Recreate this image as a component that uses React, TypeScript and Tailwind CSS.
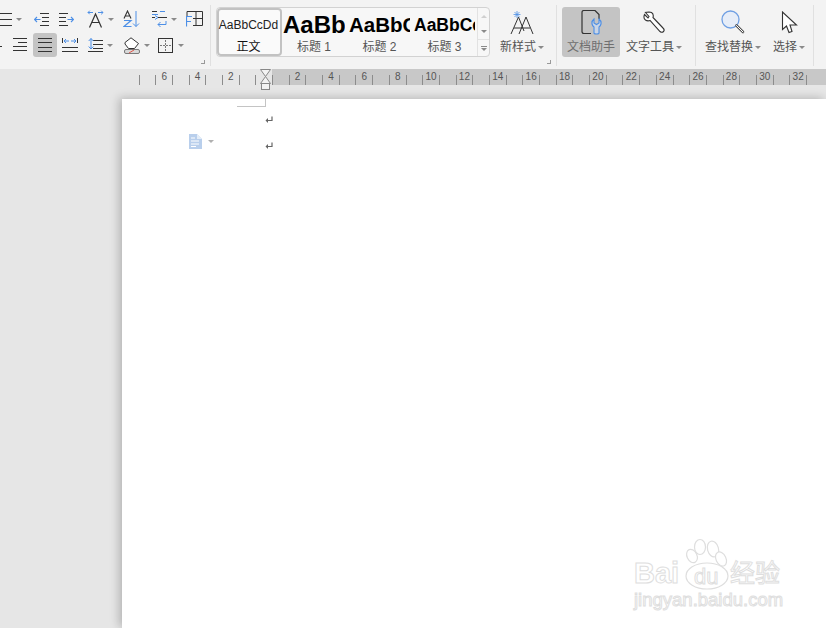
const BLUE = "#4d8fe6"
const DARK = "#333333"

const Caret = ({ className = "" }: { className?: string }) => (
    <span className={`w-0 h-0 border-x-[3px] border-x-transparent border-t-[3px] border-t-[#8a8a8a] ${className}`} />
)

const Lines = ({ w, ys, x = 0, x2 }: { w: number; ys: number[]; x?: number; x2?: number }) => (
    <>
        {ys.map((y) => (
            <path key={y} d={`M${x} ${y}.5H${x2 ?? w}`} stroke={DARK} />
        ))}
    </>
)

const Svg = ({ w, h, className = "", children }: { w: number; h: number; className?: string; children: React.ReactNode }) => (
    <svg width={w} height={h} viewBox={`0 0 ${w} ${h}`} fill="none" className={`shrink-0 ${className}`}>
        {children}
    </svg>
)

const TopRow = () => (
    <div className="flex items-center h-[18px] mt-[10px]">
        <Svg w={12} h={16}><Lines w={12} ys={[2, 8, 14]} /></Svg>
        <Caret className="ml-[4px]" />
        <Svg w={15} h={16} className="ml-[12px]">
            <path d="M6 2.5H15M8 6.5H15M8 10.5H15M6 14.5H15" stroke={DARK} />
            <path d="M6.5 8.5H0.5M3 6L0.5 8.5L3 11" stroke={BLUE} strokeWidth="1.2" />
        </Svg>
        <Svg w={15} h={16} className="ml-[10px]">
            <path d="M0 2.5H9M0 6.5H7M0 10.5H7M0 14.5H9" stroke={DARK} />
            <path d="M8.5 8.5H14.5M12 6L14.5 8.5L12 11" stroke={BLUE} strokeWidth="1.2" />
        </Svg>
        <Svg w={17} h={18} className="ml-[13px]">
            <path d="M2.5 17.5L8.5 4L14.5 17.5M5 12.5H12" stroke={DARK} strokeWidth="1.2" />
            <path d="M1 2.5H6M2.8 0.7L1 2.5L2.8 4.3M16 2.5H11M14.2 0.7L16 2.5L14.2 4.3" stroke={BLUE} />
        </Svg>
        <Caret className="ml-[4px]" />
        <Svg w={17} h={18} className="ml-[9px]">
            <path d="M1 8.5L4.5 1L8 8.5M2.2 6H6.8" stroke={DARK} strokeWidth="1.1" />
            <path d="M1 10.5H8L1 16.5H8.5" stroke={BLUE} strokeWidth="1.2" />
            <path d="M13 1V16.5M10 13.5L13 16.5L16 13.5" stroke={BLUE} />
        </Svg>
        <Svg w={15} h={18} className="ml-[12px]">
            <path d="M0 1.5H5M6 7.5H15M0 7.5H3" stroke={DARK} />
            <path d="M8 1.5H13M0 4.5H6M3 5.5L6 7.5L3 9.5" stroke={BLUE} />
            <path d="M14 11V14.5H6M8.5 12L6 14.5L8.5 17" stroke={BLUE} />
        </Svg>
        <Caret className="ml-[4px]" />
        <Svg w={17} h={16} className="ml-[9px]">
            <path d="M1 5V0.5H16.5V14.5H7M10 0.5V14.5M7 7.5H16.5" stroke={DARK} />
            <path d="M0.5 15.5V5.5H6M0.5 10.5H5" stroke={BLUE} strokeWidth="1.2" />
        </Svg>
    </div>
)

const BottomRow = () => (
    <div className="flex items-center h-[24px] mt-[5px]">
        <Svg w={3} h={16} className="mr-[10px]"><Lines w={2} ys={[9]} /></Svg>
        <Svg w={14} h={16}><Lines w={14} ys={[1, 9, 13]} /><path d="M5 5.5H14" stroke={DARK} /></Svg>
        <div className="ml-[6px] w-[24px] h-[24px] rounded-[3px] bg-[#c4c4c4] flex items-center justify-center">
            <Svg w={14} h={14}><Lines w={14} ys={[0, 4, 9, 13]} /></Svg>
        </div>
        <Svg w={16} h={15} className="ml-[5px]">
            <path d="M0.5 0V5M15.5 0V5M0 9.5H16M0 13.5H16" stroke={DARK} />
            <path d="M2 3H7M4 1L2 3L4 5M14 3H9M12 1L14 3L12 5" stroke={BLUE} />
        </Svg>
        <Svg w={15} h={15} className="ml-[10px]">
            <path d="M5 2.5H15M5 6.5H15M5 10.5H15M0 13.5H15" stroke={DARK} />
            <path d="M3 0.5V11M0.7 3L3 0.5L5.3 3M0.7 8.5L3 11L5.3 8.5" stroke={BLUE} />
        </Svg>
        <Caret className="ml-[4px]" />
        <Svg w={16} h={17} className="ml-[11px]">
            <path d="M1 5.5L7 0.8L14.5 6.5L10.5 11.5H4.5L1 7Z" stroke={DARK} fill="#fff" />
            <rect x="0.5" y="12.5" width="15" height="4" rx="1.5" fill="#d9d9d9" stroke="#7a7a7a" />
            <path d="M5 16L10 13" stroke="#e0584c" />
        </Svg>
        <Caret className="ml-[4px]" />
        <Svg w={15} h={15} className="ml-[8px]">
            <rect x="0.5" y="0.5" width="14" height="14" stroke={DARK} />
            <path d="M7.5 2V13M2 7.5H13" stroke="#777" strokeDasharray="2 1" />
        </Svg>
        <Caret className="ml-[5px]" />
    </div>
)

const CornerMark = () => (
    <span className="absolute right-[5px] bottom-[5px] w-[4px] h-[4px] border-r border-b border-[#999]" />
)

const Sep = ({ className = "" }: { className?: string }) => <div className={`w-px h-[61px] bg-[#e0e0e0] shrink-0 ${className}`} />

const styles = [
    { label: "标题 1", sample: "AaBb", w: "w-[62px]", cls: "text-[24px] font-bold", ml: "ml-[1px]" },
    { label: "标题 2", sample: "AaBbCc", w: "w-[61px]", cls: "text-[20.5px] font-bold", ml: "ml-[4px]" },
    { label: "标题 3", sample: "AaBbCcDd", w: "w-[61px]", cls: "text-[17.5px] font-bold", ml: "ml-[4px]" },
]

const Gallery = () => (
    <div className="ml-[5px] mt-[7px] w-[274px] h-[50px] flex border border-[#d2d2d2] rounded-[4px] bg-[#f7f7f7] overflow-hidden shrink-0">
        <div className="w-[65px] h-[48px] pr-[2px] border-2 border-[#c2c2c2] rounded-[4px] bg-[#fafafa] flex flex-col items-center shrink-0">
            <div className="text-[12px] leading-[14px] mt-[8px] text-[#222] whitespace-nowrap">AaBbCcDd</div>
            <div className="text-[12px] leading-[16px] mt-[7px] text-[#111]">正文</div>
        </div>
        {styles.map((s) => (
            <div key={s.label} className={`${s.w} ${s.ml} flex flex-col items-center shrink-0`}>
                <div className="h-[30px] mt-[2px] w-full overflow-hidden flex items-center">
                    <span className={`${s.cls} leading-[30px] text-black whitespace-nowrap`}>{s.sample}</span>
                </div>
                <div className="text-[12px] leading-[16px] -mt-[1px] text-[#555]">{s.label}</div>
            </div>
        ))}
        <div className="ml-auto w-[12px] border-l border-[#e2e2e2] flex flex-col shrink-0">
            <div className="h-[16px] flex items-center justify-center">
                <span className="w-0 h-0 border-x-[3px] border-x-transparent border-b-[3px] border-b-[#d0d0d0]" />
            </div>
            <div className="h-[16px] flex items-center justify-center border-b border-[#e2e2e2]">
                <Caret />
            </div>
            <div className="flex-1 flex flex-col items-center justify-center gap-[1px]">
                <span className="w-[6px] h-px bg-[#8a8a8a]" />
                <Caret />
            </div>
        </div>
    </div>
)

const BigButton = ({ w, label, icon, active = false, caret = true, className = "" }: { w: string; label: string; icon: React.ReactNode; active?: boolean; caret?: boolean; className?: string }) => (
    <div className={`${w} h-[50px] mt-[7px] rounded-[3px] flex flex-col items-center shrink-0 ${active ? "bg-[#c4c4c4]" : ""} ${className}`}>
        <div className="h-[26px] mt-[2px] flex items-center justify-center">{icon}</div>
        <div className={`flex items-center gap-[2px] mt-[3px] text-[12px] leading-[18px] whitespace-nowrap ${active ? "text-[#6f6f6f]" : "text-[#555]"}`}>
            {label}
            {caret && <Caret />}
        </div>
    </div>
)

const Toolbar = () => (
    <div className="h-[69px] bg-[#f3f3f3] flex shrink-0 font-['Liberation_Sans','Noto_Sans_CJK_SC',sans-serif]">
        <div className="relative w-[210px] shrink-0">
            <TopRow />
            <BottomRow />
            <CornerMark />
        </div>
        <Sep className="mt-[5px]" />
        <Gallery />
        <div className="relative w-[66px] shrink-0 pl-[3px]">
            <BigButton
                w="w-[58px]"
                label="新样式"
                icon={
                    <Svg w={24} h={25}>
                        <path d="M1 24L8.5 7L14 21M9 24L16 7L23 24M4 18H12M12 18H20" stroke={DARK} />
                        <path d="M7 1V8M3.5 4.5H10.5M4.5 2L9.5 7M9.5 2L4.5 7" stroke={BLUE} strokeWidth="0.8" />
                    </Svg>
                }
            />
            <CornerMark />
        </div>
        <Sep className="mt-[5px]" />
        <BigButton
            w="w-[58px]"
            className="ml-[5px]"
            label="文档助手"
            active
            caret={false}
            icon={
                <Svg w={21} h={25}>
                    <path d="M10 23.5H3Q1 23.5 1 21.5V2.5Q1 0.5 3 0.5H14L18 4.5V9" stroke={DARK} strokeWidth="1.2" />
                    <path d="M13 9V13L15.5 14.5L18 13V9Q20.5 11 20 14Q19.5 16 18 17V23Q18 24 15.5 24Q13 24 13 23V17Q11.5 16 11 14Q10.5 11 13 9Z" stroke={BLUE} strokeWidth="1.1" fill="#c9d5e6" />
                </Svg>
            }
        />
        <BigButton
            w="w-[62px]"
            className="ml-[3px]"
            label="文字工具"
            icon={
                <Svg w={22} h={23}>
                    <path d="M6 1L2.5 1.5L6 5.5L5 7L1.5 3.5Q0 7 2.5 9Q4.5 10.5 7 9.5L17 20.5Q19 22 20.5 20.5Q22 19 20 17L10 6.5Q11 3 8.5 1.5Q7.5 1 6 1Z" stroke={DARK} strokeWidth="1.1" fill="#fff" />
                </Svg>
            }
        />
        <Sep className="ml-[10px] mt-[5px]" />
        <BigButton
            w="w-[62px]"
            className="ml-[6px]"
            label="查找替换"
            icon={
                <Svg w={24} h={24}>
                    <circle cx="9.5" cy="9.5" r="8.5" fill="#e6edf8" stroke="#6f9fe3" strokeWidth="1.3" />
                    <path d="M15.5 15.5L22 22" stroke="#555" strokeWidth="2.6" strokeLinecap="round" />
                    <path d="M15.5 15.5L22 22" stroke="#fff" strokeWidth="1" strokeLinecap="round" />
                </Svg>
            }
        />
        <BigButton
            w="w-[38px]"
            className="ml-[6px]"
            label="选择"
            icon={
                <Svg w={17} h={23}>
                    <path d="M1.5 1V18.5L5.5 15L8 21.5L11 20.5L9 14H15.5Z" stroke={DARK} strokeWidth="1.1" fill="#fff" />
                </Svg>
            }
        />
        <Sep className="ml-[5px] mt-[5px]" />
    </div>
)

const leftTicks: Record<number, string> = { 1: "6", 3: "4", 5: "2" }
const rightLabels = [2, 4, 6, 8, 10, 12, 14, 16, 18, 20, 22, 24, 26, 28, 30, 32]

const Ruler = () => (
    <div className="relative h-[16px] flex shrink-0 text-[10px] leading-[14px] text-[#555] font-['Liberation_Sans',sans-serif]">
        <div className="w-[272px] flex justify-end shrink-0">
            {[0, 1, 2, 3, 4, 5, 6, 7].map((i) => (
                <div key={i} className="w-[16.67px] h-[10px] mt-[6px] border-l border-[#8c8c8c] text-center shrink-0">
                    <span className="block -mt-[5px]">{leftTicks[i]}</span>
                </div>
            ))}
        </div>
        <div className="flex-1 bg-[#c8c8c8] flex overflow-hidden">
            {Array.from({ length: 33 }).map((_, i) => (
                <div key={i} className="w-[16.7px] h-[10px] mt-[6px] border-l border-[#8c8c8c] text-center shrink-0">
                    <span className="block -mt-[5px]">{i % 2 === 1 ? rightLabels[(i - 1) / 2] : ""}</span>
                </div>
            ))}
        </div>
        {/* indent marker */}
        <div className="absolute left-[260px] top-0 w-[11px] h-[21px]">
            <svg width="11" height="21" viewBox="0 0 11 21" fill="none">
                <path d="M0.5 0.5H10.5L5.5 7.5Z" fill="#f3f3f3" stroke="#888" />
                <path d="M0.5 14.5L5.5 7.5L10.5 14.5Z" fill="#f3f3f3" stroke="#888" />
                <rect x="1.5" y="14.5" width="8" height="6" fill="#f3f3f3" stroke="#888" />
            </svg>
        </div>
    </div>
)

const ReturnMark = () => (
    <Svg w={8} h={8}>
        <path d="M7 0.5V4.5H2" stroke="#666" strokeWidth="1.2" />
        <path d="M0.5 4.5L3 2V7Z" fill="#666" />
    </Svg>
)

const Watermark = () => (
    <div className="absolute right-[44px] bottom-[20px] w-[150px] h-[70px] text-transparent [-webkit-text-stroke:1px_#dedede] font-['Liberation_Sans','Noto_Sans_CJK_SC',sans-serif]">
        <svg width="60" height="52" viewBox="0 0 60 52" fill="none" className="absolute left-[51px] top-0">
            <g stroke="#dedede" strokeWidth="1.2" fill="#fff">
                <ellipse cx="17" cy="9" rx="5.5" ry="7.5" />
                <ellipse cx="30" cy="11" rx="5.5" ry="8" transform="rotate(-15 30 11)" />
                <ellipse cx="9" cy="18" rx="5" ry="7" transform="rotate(-25 9 18)" />
                <ellipse cx="38" cy="21" rx="5" ry="7.5" transform="rotate(-25 38 21)" />
                <ellipse cx="24" cy="38" rx="21" ry="13" />
            </g>
        </svg>
        <div className="absolute left-[2px] top-[20px] text-[29px] leading-[30px] font-bold whitespace-nowrap">Bai</div>
        <div className="absolute left-[62px] top-[27px] text-[22px] leading-[24px] whitespace-nowrap">du</div>
        <div className="absolute left-[98px] top-[21px] text-[25px] leading-[28px] whitespace-nowrap">经验</div>
        <div className="absolute left-[2px] top-[52px] text-[18.5px] leading-[20px] whitespace-nowrap">jingyan.baidu.com</div>
    </div>
)

const Page = () => (
    <div className="relative ml-[122px] mt-[14px] flex-1 bg-white shadow-[-3px_-1px_9px_rgba(0,0,0,0.22)] font-['Liberation_Sans','Noto_Sans_CJK_SC',sans-serif]">
        <div className="ml-[115px] w-[29px] h-[8px] border-r border-b border-[#c4c4c4]" />
        <div className="ml-[143px] mt-[9px] h-[8px] flex"><ReturnMark /></div>
        <div className="flex mt-[10px] h-[16px] ml-[67px]">
            <Svg w={13} h={15}>
                <path d="M0 0H8L13 5V15H0Z" fill="#b9cfec" />
                <path d="M8 0L13 5H8Z" fill="#e4edf8" />
                <path d="M2 4H6M2 7H10M2 10H10M2 12.5H7" stroke="#fff" />
            </Svg>
            <Caret className="ml-[6px] mt-[6px] border-t-[#b0b0b0]" />
            <div className="ml-[51px] mt-[8px] flex"><ReturnMark /></div>
        </div>
        <Watermark />
    </div>
)

export default function App() {
    return (
        <div className="w-[826px] h-[628px] overflow-hidden flex flex-col bg-[#e6e6e6]">
            <Toolbar />
            <Ruler />
            <Page />
        </div>
    )
}
